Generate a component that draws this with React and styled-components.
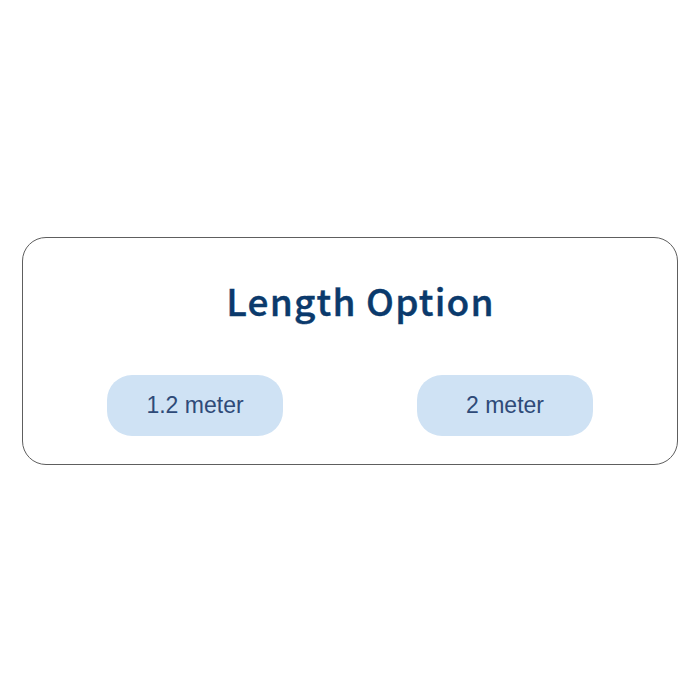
import React from "react";
import styled, { createGlobalStyle } from "styled-components";

const Global = createGlobalStyle`
  html, body { margin: 0; padding: 0; background: #ffffff; }
  body { font-family: "Liberation Sans", Arial, sans-serif; }
`;

const Page = styled.div`
  width: 700px;
  height: 700px;
  box-sizing: border-box;
  padding: 237px 22px 0 22px;
`;

const Card = styled.section`
  box-sizing: border-box;
  width: 656px;
  height: 228px;
  border: 1px solid #5e5e5e;
  border-radius: 24px;
  background: #ffffff;
  display: flex;
  flex-direction: column;
  align-items: center;
  padding-top: 38px;
`;

const Title = styled.h2`
  margin: 0 0 0 21px;
  font-family: "Noto Sans CJK SC", "Noto Sans", sans-serif;
  font-weight: 500;
  font-size: 37px;
  line-height: 48px;
  letter-spacing: 1.2px;
  color: #0b3a6c;
  -webkit-text-stroke: 0.4px #0b3a6c;
`;

const Options = styled.div`
  align-self: stretch;
  display: flex;
  justify-content: space-between;
  padding: 0 84px;
  margin-top: 51px;
`;

const Option = styled.button`
  width: 176px;
  height: 61px;
  border: none;
  border-radius: 25px;
  background: #cfe2f4;
  color: #2e4a78;
  font-family: "Liberation Sans", Arial, sans-serif;
  font-size: 23px;
  padding: 0;
  cursor: pointer;
`;

export default function App() {
  return (
    <>
      <Global />
      <Page>
        <Card>
          <Title>Length Option</Title>
          <Options>
            <Option>1.2 meter</Option>
            <Option>2 meter</Option>
          </Options>
        </Card>
      </Page>
    </>
  );
}
